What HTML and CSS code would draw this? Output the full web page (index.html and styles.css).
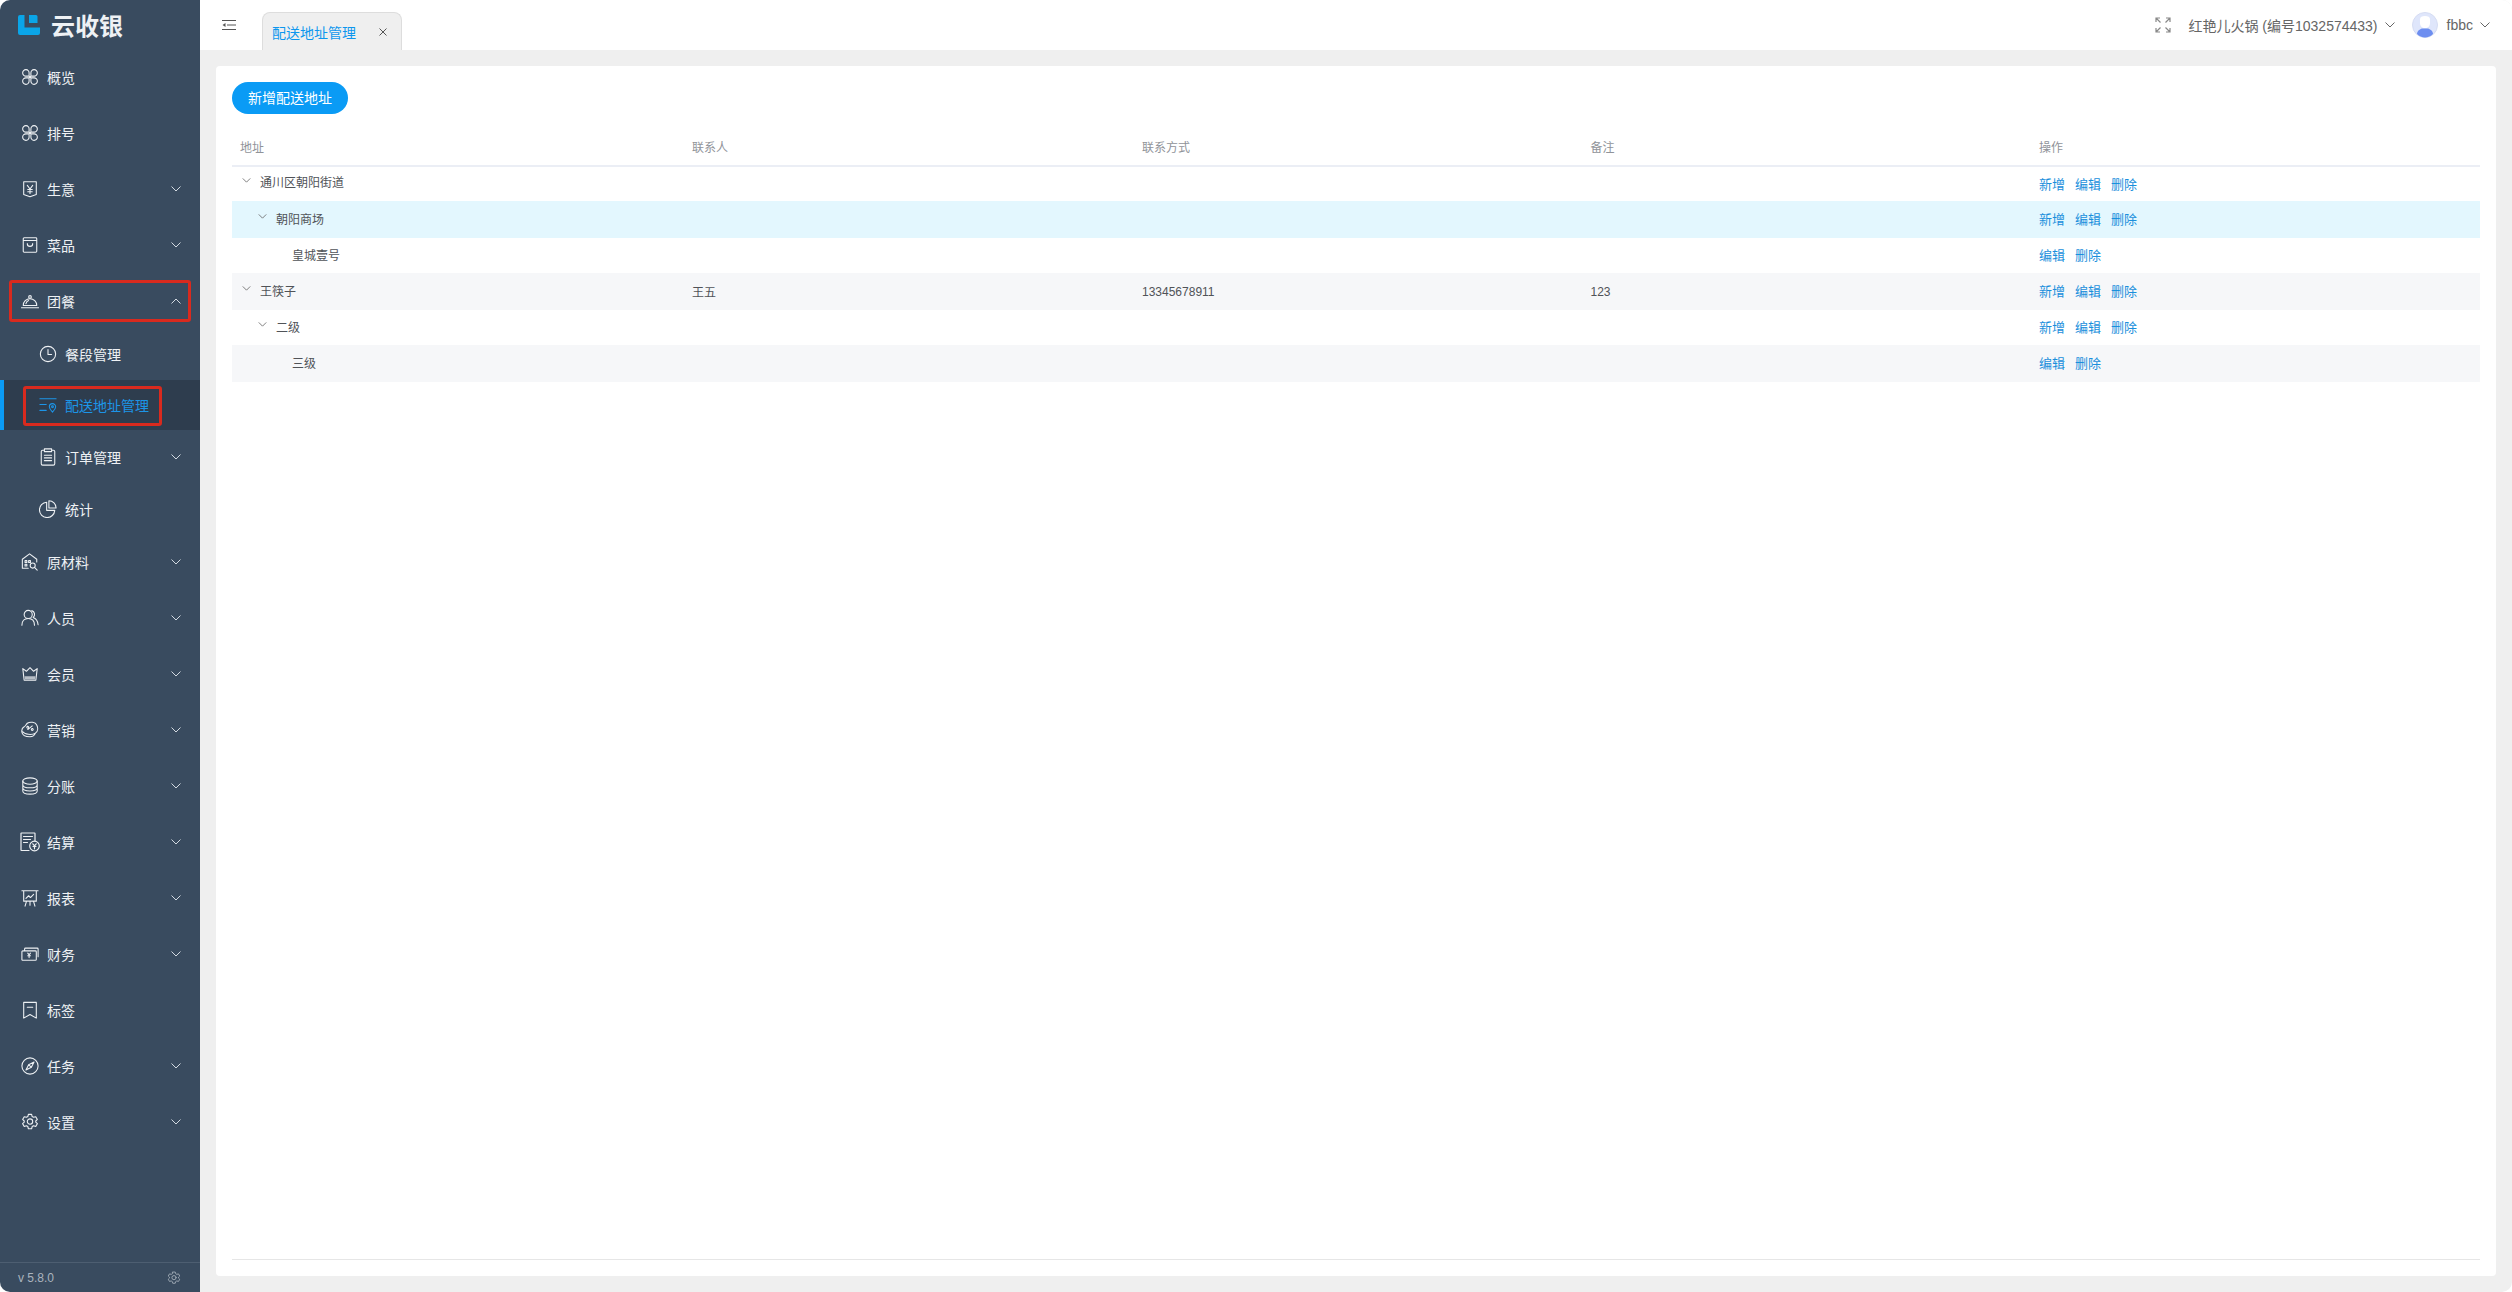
FILE: index.html
```html
<!DOCTYPE html>
<html lang="zh-CN">
  <head>
    <meta charset="UTF-8" />
    <title>配送地址管理</title>
    <link rel="stylesheet" href="styles.css">
  </head>
  <body>
    <div class="app">
      <aside class="sidebar">
        <div class="logo">
          <svg class="logo-mark" viewBox="0 0 22 20"><path d="M2 0h4.500v12.500H22V18a2 2 0 0 1-2 2H2a2 2 0 0 1-2-2V2a2 2 0 0 1 2-2zM11 0h7a1.500 1.500 0 0 1 1.500 1.500V8H11z"/></svg>
          <span>云收银</span>
        </div>

        <nav class="menu">
          <a class="menu-item">
            <svg class="icon" viewBox="0 0 20 20"><path d="M9 9H5.800A3.600 3.600 0 1 1 9 5.800zM11 9h3.200A3.600 3.600 0 1 0 11 5.800zM9 11H5.800A3.600 3.600 0 1 0 9 14.200zM11 11h3.200A3.600 3.600 0 1 1 11 14.200zM9 9l2 2M11 9l-2 2"/></svg>
            <span>概览</span>
          </a>
          <a class="menu-item">
            <svg class="icon" viewBox="0 0 20 20"><path d="M9 9H5.800A3.600 3.600 0 1 1 9 5.800zM11 9h3.200A3.600 3.600 0 1 0 11 5.800zM9 11H5.800A3.600 3.600 0 1 0 9 14.200zM11 11h3.200A3.600 3.600 0 1 1 11 14.200zM9 9l2 2M11 9l-2 2"/></svg>
            <span>排号</span>
          </a>
          <a class="menu-item">
            <svg class="icon" viewBox="0 0 20 20"><path d="M3 2h14v14l-7 2.500L3 16zM7 6l3 4 3-4M10 10v5M7.500 10.500h5M7.500 13h5"/></svg>
            <span>生意</span>
            <svg class="chevron" viewBox="0 0 10 6"><path d="M.5.500 5 5 9.500.500"/></svg>
          </a>
          <a class="menu-item">
            <svg class="icon" viewBox="0 0 20 20"><path d="M3.500 2h13a1 1 0 0 1 1 1v14a1 1 0 0 1-1 1h-13a1 1 0 0 1-1-1V3a1 1 0 0 1 1-1zM2.500 5h15M7 8.500c0 4 6 4 6 0"/></svg>
            <span>菜品</span>
            <svg class="chevron" viewBox="0 0 10 6"><path d="M.5.500 5 5 9.500.500"/></svg>
          </a>
          <a class="menu-item">
            <svg class="icon" viewBox="0 0 20 20"><path d="M2.500 15a7.500 7.500 0 0 1 15 0zM.5 17.500h19M5.500 13c.5-2 1.500-3 3-3.500"/><circle cx="10" cy="5.500" r="1.500"/></svg>
            <span>团餐</span>
            <svg class="chevron" viewBox="0 0 10 6"><path d="M.5 5.500 5 1l4.500 4.500"/></svg>
            <i class="mark mark-group"></i>
          </a>

          <div class="submenu">
            <a class="sub-item">
              <svg class="icon" viewBox="0 0 20 20"><circle cx="10" cy="10" r="8.500"/><path d="M10 5v5.500h4"/></svg>
              <span>餐段管理</span>
            </a>
            <a class="sub-item active">
              <svg class="icon" viewBox="0 0 20 20"><path d="M1 3h18M1 9.500h7M1 16h7M15 8.500a3.500 3.500 0 0 1 3.500 3.500c0 2.500-3.500 6-3.500 6s-3.500-3.500-3.500-6A3.500 3.500 0 0 1 15 8.500z"/><circle cx="15" cy="12" r="1"/></svg>
              <span>配送地址管理</span>
              <i class="mark mark-address"></i>
            </a>
            <a class="sub-item">
              <svg class="icon" viewBox="0 0 20 20"><path d="M6 2.500H4a1.500 1.500 0 0 0-1.500 1.500v13.500A1.500 1.500 0 0 0 4 19h12a1.500 1.500 0 0 0 1.500-1.500V4A1.500 1.500 0 0 0 16 2.500h-2M6 1h8v3H6zM6 8h8M6 11h8M6 14h8"/></svg>
              <span>订单管理</span>
              <svg class="chevron" viewBox="0 0 10 6"><path d="M.5.500 5 5 9.500.500"/></svg>
            </a>
            <a class="sub-item">
              <svg class="icon" viewBox="0 0 20 20"><path d="M8.500 2.500a8.500 8.500 0 1 0 9 9h-9zM11 .800a8 8 0 0 1 8 8h-8z"/></svg>
              <span>统计</span>
            </a>
          </div>

          <a class="menu-item">
            <svg class="icon" viewBox="0 0 20 20"><path d="M8 17H1.500V7L9.500 1l8 6v3M4.500 8.500h2v2h-2zM8.500 8.500h2v2h-2zM4.500 12.500h2v2h-2z"/><circle cx="13" cy="14" r="2.800"/><path d="M15 16l3 3"/></svg>
            <span>原材料</span>
            <svg class="chevron" viewBox="0 0 10 6"><path d="M.5.500 5 5 9.500.500"/></svg>
          </a>
          <a class="menu-item">
            <svg class="icon" viewBox="0 0 20 20"><circle cx="8" cy="6" r="4.500"/><path d="M1 18c0-5 3-7.500 7-7.500s7 2.500 7 7.500M12 1.800a4.500 4.500 0 0 1 1.500 7.700c3 1 5 3.500 5.500 8"/></svg>
            <span>人员</span>
            <svg class="chevron" viewBox="0 0 10 6"><path d="M.5.500 5 5 9.500.500"/></svg>
          </a>
          <a class="menu-item">
            <svg class="icon" viewBox="0 0 20 20"><path d="M2 4l4 3 4-4 4 4 4-3-1.500 13h-13z"/><path class="solid" d="M4 12.500h12l-.500 3.500h-11z"/></svg>
            <span>会员</span>
            <svg class="chevron" viewBox="0 0 10 6"><path d="M.5.500 5 5 9.500.500"/></svg>
          </a>
          <a class="menu-item">
            <svg class="icon" viewBox="0 0 20 20"><path d="M7 2.500c3-2 9-1.500 10.500 2 1.500 3 1.500 7-1.500 9-1 2.500-3 4-6 4-4 0-8.500-1.500-9-5-.500-3 .5-5 2.500-6 1.500-1 2.500-3 3.500-4zM2 12c2 3 10 4 14 1.500M7.500 9.500l5-4M7.500 6a1 1 0 1 0 .01 0M12.500 8.500a1 1 0 1 0 .01 0"/></svg>
            <span>营销</span>
            <svg class="chevron" viewBox="0 0 10 6"><path d="M.5.500 5 5 9.500.500"/></svg>
          </a>
          <a class="menu-item">
            <svg class="icon" viewBox="0 0 20 20"><ellipse cx="10" cy="4.500" rx="8" ry="3.500"/><path d="M2 4.500v11C2 17.500 5.500 19 10 19s8-1.500 8-3.500v-11M2 8.500C2 10.500 5.500 12 10 12s8-1.500 8-3.500M2 12c0 2 3.500 3.500 8 3.500s8-1.500 8-3.500"/></svg>
            <span>分账</span>
            <svg class="chevron" viewBox="0 0 10 6"><path d="M.5.500 5 5 9.500.500"/></svg>
          </a>
          <a class="menu-item">
            <svg class="icon icon-wide" viewBox="0 0 20 20"><path d="M9 18.500H1.500A.5.500 0 0 1 1 18V1.500a.5.500 0 0 1 .5-.5h13a.5.500 0 0 1 .5.500V9M3.500 4.500h9M3.500 7.500h7M3.500 10.500h4"/><circle cx="14.500" cy="14" r="4.800"/><path d="M12.800 11.800l1.700 2 1.700-2M14.500 13.800v3M13 14.500h3"/></svg>
            <span>结算</span>
            <svg class="chevron" viewBox="0 0 10 6"><path d="M.5.500 5 5 9.500.500"/></svg>
          </a>
          <a class="menu-item">
            <svg class="icon" viewBox="0 0 20 20"><path d="M1 2h18M3 2.500v11h14v-11M6 14l-1.500 5M14 14l1.500 5M10 14v4M5.500 10.500l3-3 2 2 3.500-3.500"/></svg>
            <span>报表</span>
            <svg class="chevron" viewBox="0 0 10 6"><path d="M.5.500 5 5 9.500.500"/></svg>
          </a>
          <a class="menu-item">
            <svg class="icon" viewBox="0 0 20 20"><path d="M2 6.500h14a1 1 0 0 1 1 1V16a1 1 0 0 1-1 1H2a1 1 0 0 1-1-1V7.500a1 1 0 0 1 1-1zM4 6.500V4.500a1 1 0 0 1 1-1h13a1 1 0 0 1 1 1V13M7.500 9l1.500 2 1.500-2M9 11v3M7.500 12h3"/></svg>
            <span>财务</span>
            <svg class="chevron" viewBox="0 0 10 6"><path d="M.5.500 5 5 9.500.500"/></svg>
          </a>
          <a class="menu-item">
            <svg class="icon" viewBox="0 0 20 20"><path d="M3 1.500h14v17.500l-7-4-7 4zM7 7h6"/></svg>
            <span>标签</span>
          </a>
          <a class="menu-item">
            <svg class="icon" viewBox="0 0 20 20"><circle cx="10" cy="10" r="9"/><path d="M14.500 5.500 11.500 11.500 8.500 8.500zM5.500 14.500 8.500 8.500l3 3z"/></svg>
            <span>任务</span>
            <svg class="chevron" viewBox="0 0 10 6"><path d="M.5.500 5 5 9.500.500"/></svg>
          </a>
          <a class="menu-item">
            <svg class="icon" viewBox="0 0 20 20"><path d="M8.200 1.500h3.600l.6 2.400 1.600.9 2.400-.7 1.800 3.100-1.800 1.700v1.200l1.800 1.700-1.800 3.100-2.400-.7-1.600.9-.6 2.400H8.200l-.6-2.400-1.600-.9-2.400.7-1.800-3.100 1.800-1.700V8.900L1.800 7.200l1.800-3.100 2.400.7 1.600-.9z"/><circle cx="10" cy="9.500" r="3"/></svg>
            <span>设置</span>
            <svg class="chevron" viewBox="0 0 10 6"><path d="M.5.500 5 5 9.500.500"/></svg>
          </a>
        </nav>

        <div class="sidebar-footer">
          <span>v 5.8.0</span>
          <svg class="icon icon-small" viewBox="0 0 20 20"><path d="M8.200 1.500h3.600l.6 2.400 1.600.9 2.400-.7 1.800 3.100-1.800 1.700v1.200l1.800 1.700-1.800 3.100-2.400-.7-1.600.9-.6 2.400H8.200l-.6-2.400-1.600-.9-2.400.7-1.800-3.100 1.800-1.700V8.900L1.800 7.200l1.800-3.100 2.400.7 1.600-.9z"/><circle cx="10" cy="9.500" r="3"/></svg>
        </div>
      </aside>

      <div class="main">
        <header class="topbar">
          <svg class="toggle" viewBox="0 0 14 10"><path d="M0 .500h14M5 5h9M0 9.500h14"/><path class="solid" d="M3.500 3v4L.5 5z"/></svg>
          <div class="tab">
            <span>配送地址管理</span>
            <svg class="tab-close" viewBox="0 0 8 8"><path d="M.5.500l7 7M7.500.500l-7 7"/></svg>
          </div>

          <div class="topbar-right">
            <svg class="fullscreen" viewBox="0 0 16 16"><path d="M1 5V1h4M1 1l4.500 4.500M11 1h4v4M15 1l-4.500 4.500M1 11v4h4M1 15l4.500-4.500M11 15h4v-4M15 15l-4.500-4.500"/></svg>
            <div class="dropdown">
              <span>红艳儿火锅 (编号1032574433)</span>
              <svg class="caret" viewBox="0 0 10 6"><path d="M.5.500 5 5 9.500.500"/></svg>
            </div>
            <div class="dropdown user">
              <svg class="avatar" viewBox="0 0 26 26">
                <circle class="avatar-bg" cx="13" cy="13" r="12.500"/>
                <path class="avatar-head" d="M8 7c0-2 2-3 5-3s5 1 5 3v4c0 3-2 5-5 5s-5-2-5-5z"/>
                <path class="avatar-body" d="M5 22c0-3 3-5 5-5.500h6c2 .5 5 2.500 5 5.500-2 2-5 3.500-8 3.500s-6-1.500-8-3.500z"/>
              </svg>
              <span>fbbc</span>
              <svg class="caret" viewBox="0 0 10 6"><path d="M.5.500 5 5 9.500.500"/></svg>
            </div>
          </div>
        </header>

        <div class="content">
          <section class="card">
            <div class="toolbar">
              <button class="btn-primary">新增配送地址</button>
            </div>
            <div class="table-wrap">
              <table class="tree-table">
                <thead>
                  <tr><th>地址</th><th>联系人</th><th>联系方式</th><th>备注</th><th>操作</th></tr>
                </thead>
                <tbody>
                  <tr>
                    <td><div class="tree-cell"><svg class="tree-arrow" viewBox="0 0 10 6"><path d="M.5.500 5 5 9.500.500"/></svg>通川区朝阳街道</div></td>
                    <td></td><td></td><td></td>
                    <td class="actions"><a>新增</a><a>编辑</a><a>删除</a></td>
                  </tr>
                  <tr class="row-current">
                    <td><div class="tree-cell level-1"><svg class="tree-arrow" viewBox="0 0 10 6"><path d="M.5.500 5 5 9.500.500"/></svg>朝阳商场</div></td>
                    <td></td><td></td><td></td>
                    <td class="actions"><a>新增</a><a>编辑</a><a>删除</a></td>
                  </tr>
                  <tr>
                    <td><div class="tree-cell level-2">皇城壹号</div></td>
                    <td></td><td></td><td></td>
                    <td class="actions"><a>编辑</a><a>删除</a></td>
                  </tr>
                  <tr class="row-striped">
                    <td><div class="tree-cell"><svg class="tree-arrow" viewBox="0 0 10 6"><path d="M.5.500 5 5 9.500.500"/></svg>王筷子</div></td>
                    <td>王五</td><td>13345678911</td><td>123</td>
                    <td class="actions"><a>新增</a><a>编辑</a><a>删除</a></td>
                  </tr>
                  <tr>
                    <td><div class="tree-cell level-1"><svg class="tree-arrow" viewBox="0 0 10 6"><path d="M.5.500 5 5 9.500.500"/></svg>二级</div></td>
                    <td></td><td></td><td></td>
                    <td class="actions"><a>新增</a><a>编辑</a><a>删除</a></td>
                  </tr>
                  <tr class="row-striped">
                    <td><div class="tree-cell level-2">三级</div></td>
                    <td></td><td></td><td></td>
                    <td class="actions"><a>编辑</a><a>删除</a></td>
                  </tr>
                </tbody>
              </table>
            </div>
          </section>
        </div>
      </div>
    </div>
  </body>
</html>
```

FILE: styles.css
```css
* {
  margin: 0;
  padding: 0;
  box-sizing: border-box;
}

body {
  font-family: "Liberation Sans", "Noto Sans CJK SC", sans-serif;
  background: #ffffff;
  color: #555555;
  height: 100vh;
  overflow: hidden;
}

.app {
  display: flex;
  height: 100%;
  border-radius: 10px;
  overflow: hidden;
}

/* Sidebar */
.sidebar {
  width: 200px;
  flex-shrink: 0;
  display: flex;
  flex-direction: column;
  background: #394b5f;
  color: #eef1f4;
}

.logo {
  height: 49px;
  display: flex;
  align-items: center;
  gap: 11px;
  padding-left: 18px;
  font-size: 24px;
  font-weight: 700;
  color: #eef1f4;
}

.logo-mark {
  width: 22px;
  height: 20px;
  fill: #0aa5e8;
}

.menu {
  flex: 1;
}

.icon {
  width: 18px;
  height: 18px;
  flex-shrink: 0;
  fill: none;
  stroke: currentColor;
  stroke-width: 1.2;
  stroke-linejoin: round;
  stroke-linecap: round;
}

.icon .solid {
  fill: currentColor;
  stroke: none;
  opacity: 0.7;
}

.icon-wide {
  width: 20px;
  height: 20px;
  margin: 0 -1px;
}

.chevron {
  width: 10px;
  height: 6px;
  margin-left: auto;
  fill: none;
  stroke: #d3dae1;
  stroke-width: 1;
}

.menu-item {
  position: relative;
  height: 56px;
  display: flex;
  align-items: center;
  gap: 8px;
  padding: 0 19px 0 21px;
  font-size: 14px;
}

.submenu {
  margin-bottom: -2px;
}

.sub-item {
  position: relative;
  height: 50px;
  margin-bottom: 2px;
  display: flex;
  align-items: center;
  gap: 8px;
  padding: 0 19px 0 39px;
  font-size: 14px;
}

.sub-item:first-child {
  margin-bottom: 1px;
}

.sub-item.active {
  background: #2e3d4e;
  color: #1c95e8;
  border-left: 4px solid #0a9bf5;
  padding-left: 35px;
}

/* Red annotation frames from the screenshot */
.mark {
  position: absolute;
  border: 3px solid #d92a1e;
  border-radius: 3px;
}

.mark-group {
  left: 9px;
  right: 9px;
  top: 7px;
  bottom: 7px;
}

.mark-address {
  left: 19px;
  width: 139px;
  top: 6px;
  bottom: 4px;
}

.sidebar-footer {
  height: 30px;
  display: flex;
  align-items: center;
  justify-content: space-between;
  padding: 0 19px 0 18px;
  border-top: 1px solid #4d5e71;
  font-size: 12px;
  color: #aab4be;
}

.icon-small {
  width: 14px;
  height: 14px;
}

/* Top bar */
.main {
  flex: 1;
  min-width: 0;
  display: flex;
  flex-direction: column;
  background: #efefef;
}

.topbar {
  height: 50px;
  flex-shrink: 0;
  display: flex;
  align-items: flex-end;
  background: #ffffff;
  padding-left: 22px;
}

.toggle {
  align-self: flex-start;
  width: 14px;
  height: 10px;
  margin-top: 20px;
  fill: none;
  stroke: #555555;
  stroke-width: 1;
}

.toggle .solid {
  fill: #555555;
  stroke: none;
}

.tab {
  width: 140px;
  height: 38px;
  margin-left: 26px;
  display: flex;
  align-items: center;
  justify-content: space-between;
  padding: 0 14px 0 9px;
  background: #efefef;
  border: 1px solid #dddddd;
  border-bottom: none;
  border-radius: 8px 8px 0 0;
  font-size: 14px;
  color: #0d97ee;
}

.tab-close {
  width: 8px;
  height: 8px;
  fill: none;
  stroke: #555555;
  stroke-width: 1;
}

.topbar-right {
  align-self: stretch;
  margin-left: auto;
  display: flex;
  align-items: center;
  padding-right: 22px;
  font-size: 14px;
  color: #666666;
}

.fullscreen {
  width: 16px;
  height: 16px;
  fill: none;
  stroke: #888888;
  stroke-width: 1.2;
}

.dropdown {
  display: flex;
  align-items: center;
  gap: 7px;
  margin-left: 17px;
}

.dropdown.user {
  gap: 9px;
}

.caret {
  width: 10px;
  height: 6px;
  fill: none;
  stroke: #666666;
  stroke-width: 1;
}

.user .caret {
  margin-left: -2px;
}

.avatar {
  width: 26px;
  height: 26px;
}

.avatar-bg {
  fill: #dfe6fb;
  stroke: #d5dcf2;
  stroke-width: 1;
}

.avatar-head {
  fill: #ffffff;
}

.avatar-body {
  fill: #6d8ef0;
}

/* Content card */
.content {
  flex: 1;
  min-height: 0;
  padding: 16px;
}

.card {
  height: 100%;
  display: flex;
  flex-direction: column;
  gap: 16px;
  padding: 16px;
  background: #ffffff;
  border-radius: 4px;
}

.btn-primary {
  display: block;
  width: 116px;
  height: 32px;
  padding-bottom: 2px;
  border: none;
  border-radius: 16px;
  background: #0a9bf5;
  color: #ffffff;
  font-family: inherit;
  font-size: 14px;
}

.table-wrap {
  flex: 1;
  min-height: 0;
  border-bottom: 1px solid #e6e6e6;
}

.tree-table {
  width: 100%;
  table-layout: fixed;
  border-collapse: collapse;
  font-size: 12px;
}

.tree-table th {
  height: 36px;
  padding: 0 8px 2px;
  text-align: left;
  font-weight: 400;
  color: #909399;
  border-bottom: 2px solid #ebeef5;
}

.tree-table th:nth-child(1) {
  width: 452px;
}

.tree-table th:nth-child(2) {
  width: 450px;
}

.tree-table th:nth-child(3),
.tree-table th:nth-child(4) {
  width: 448.5px;
}

.tree-table td {
  padding: 0 8px;
  color: #505358;
}

.tree-table tbody tr {
  height: 35px;
}

.tree-table tbody tr:nth-child(even) {
  height: 37px;
}

.tree-table tbody tr:first-child td {
  padding-bottom: 2px;
}

.row-current td {
  background: #e3f7fe;
}

.row-striped td {
  background: #f6f7f9;
}

.tree-cell {
  display: flex;
  align-items: center;
  margin-top: -3px;
  padding-left: 20px;
}

.tree-arrow {
  width: 9px;
  height: 5px;
  margin-left: -18px;
  margin-right: 9px;
  margin-top: -3px;
  fill: none;
  stroke: #666666;
  stroke-width: 1;
}

.tree-cell.level-1 {
  padding-left: 36px;
}

.tree-cell.level-2 {
  padding-left: 52px;
}

.tree-table td.actions {
  padding-bottom: 2px;
}

.actions a {
  font-size: 13px;
  color: #1a8fdc;
  margin-right: 10px;
}
```
